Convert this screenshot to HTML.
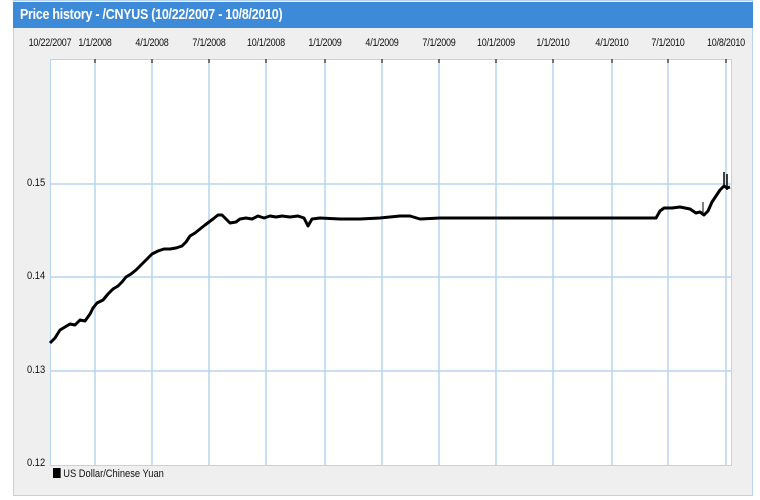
<!DOCTYPE html>
<html><head><style>
body{margin:0;width:760px;height:500px;background:#fff;position:relative;overflow:hidden;font-family:"Liberation Sans",sans-serif}
.frame{position:absolute;left:13px;top:0;width:740px;height:496px;background:#efefef;border:1px solid #b8d4f0;box-sizing:border-box}
.title{position:absolute;left:13px;top:2px;width:740px;height:26px;background:#3d8ad8}
.title span{position:absolute;left:7px;top:0;color:#fff;font-weight:bold;font-size:15px;line-height:26px;white-space:nowrap;transform:scaleX(0.83);transform-origin:0 50%;letter-spacing:-0.3px}
.xl{position:absolute;top:37px;font-size:11px;color:#111;transform:translateX(-50%) scaleX(0.82);white-space:nowrap;letter-spacing:-0.3px}
.yl{position:absolute;left:27px;font-size:11px;color:#111;transform:scaleX(0.85);transform-origin:0 0}
.leg{position:absolute;left:53px;top:468px;font-size:11px;color:#111;transform:scaleX(0.85);transform-origin:0 0;white-space:nowrap}
.leg span{display:inline-block;width:9px;height:10px;background:#000;margin-right:3px;vertical-align:-1px}
</style></head><body>
<div class="frame"></div>
<div class="title"><span>Price history - /CNYUS (10/22/2007 - 10/8/2010)</span></div>
<div class="xl" style="left:50px">10/22/2007</div>
<div class="xl" style="left:95px">1/1/2008</div>
<div class="xl" style="left:152px">4/1/2008</div>
<div class="xl" style="left:209px">7/1/2008</div>
<div class="xl" style="left:266px">10/1/2008</div>
<div class="xl" style="left:325px">1/1/2009</div>
<div class="xl" style="left:382px">4/1/2009</div>
<div class="xl" style="left:439px">7/1/2009</div>
<div class="xl" style="left:496px">10/1/2009</div>
<div class="xl" style="left:553px">1/1/2010</div>
<div class="xl" style="left:612px">4/1/2010</div>
<div class="xl" style="left:668px">7/1/2010</div>
<div class="xl" style="left:726px">10/8/2010</div>
<div class="yl" style="top:177px">0.15</div>
<div class="yl" style="top:270px">0.14</div>
<div class="yl" style="top:364px">0.13</div>
<div class="yl" style="top:457px">0.12</div>
<div class="leg"><span></span>US Dollar/Chinese Yuan</div>
<svg style="position:absolute;left:0;top:0" width="760" height="500">
<rect x="50.5" y="59.5" width="681" height="406" fill="#fff" stroke="#b8d4f0"/>
<g stroke="#b8d4f0" stroke-width="1.5">
<line x1="95" y1="59" x2="95" y2="465"/><line x1="152" y1="59" x2="152" y2="465"/><line x1="209" y1="59" x2="209" y2="465"/><line x1="266" y1="59" x2="266" y2="465"/><line x1="325" y1="59" x2="325" y2="465"/><line x1="382" y1="59" x2="382" y2="465"/><line x1="439" y1="59" x2="439" y2="465"/><line x1="496" y1="59" x2="496" y2="465"/><line x1="553" y1="59" x2="553" y2="465"/><line x1="612" y1="59" x2="612" y2="465"/><line x1="668" y1="59" x2="668" y2="465"/><line x1="726" y1="59" x2="726" y2="465"/>
<line x1="50" y1="184" x2="731" y2="184"/><line x1="50" y1="277" x2="731" y2="277"/><line x1="50" y1="371" x2="731" y2="371"/>
</g>
<g stroke="#000" stroke-width="1">
<line x1="95" y1="59" x2="95" y2="63"/><line x1="152" y1="59" x2="152" y2="63"/><line x1="209" y1="59" x2="209" y2="63"/><line x1="266" y1="59" x2="266" y2="63"/><line x1="325" y1="59" x2="325" y2="63"/><line x1="382" y1="59" x2="382" y2="63"/><line x1="439" y1="59" x2="439" y2="63"/><line x1="496" y1="59" x2="496" y2="63"/><line x1="553" y1="59" x2="553" y2="63"/><line x1="612" y1="59" x2="612" y2="63"/><line x1="668" y1="59" x2="668" y2="63"/><line x1="726" y1="59" x2="726" y2="63"/>
</g>
<polyline fill="none" stroke="#000" stroke-width="3" stroke-linejoin="round" points="50,343 55,338 60,330 65,327 70,324 75,325 80,320 85,321 90,314 93,308 97,303 103,300 108,294 113,289 118,286 122,282 126,277 131,274 136,270 140,266 144,262 148,258 152,254 158,251 164,249 170,249 176,248 182,246 186,242 190,236 195,233 200,229 205,225 209,222 213,219 218,215 222,215 226,219 230,223 236,222 240,219 246,218 252,219 258,216 264,218 270,216 276,217 282,216 290,217 298,216 304,218 308,226 312,219 320,218 340,219 360,219 380,218 400,216 410,216 420,219 440,218 480,218 520,218 560,218 600,218 640,218 656,218 660,211 664,208 672,208 680,207 690,209 696,213 700,212 704,215 708,211 712,202 716,196 720,190 724,186 727,188 730,187"/>
<line x1="724" y1="172" x2="724" y2="186" stroke="#000" stroke-width="1.5"/>
<line x1="727" y1="174" x2="727" y2="190" stroke="#000" stroke-width="1.5"/>
<line x1="703" y1="202" x2="703" y2="213" stroke="#000" stroke-width="1"/>
</svg>
</body></html>
